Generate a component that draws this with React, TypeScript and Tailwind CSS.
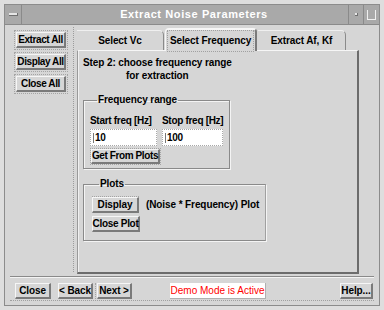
import React from "react";

function Btn({ children, className = "" }: { children: React.ReactNode; className?: string }) {
  return (
    <div
      className={`flex items-center justify-center border-t border-l border-t-[#f6f6f6] border-l-[#f6f6f6] border-b-2 border-r-2 border-b-[#7a7a7a] border-r-[#7a7a7a] bg-[#d6d6d6] whitespace-nowrap ${className}`}
    >
      {children}
    </div>
  );
}

function Field({ value, className = "" }: { value: string; className?: string }) {
  return (
    <div className={`flex items-center h-[17px] bg-white border border-dotted border-[#a8a8a8] pl-[2px] ${className}`}>
      <div className="w-[1px] h-[10px] bg-[#777] mr-[1px]" />
      <span className="font-bold">{value}</span>
    </div>
  );
}

export default function App() {
  return (
    <div className="w-[384px] h-[310px] bg-[#dedede] pt-[4px] px-[4px] pb-[4px] font-['Liberation_Sans',sans-serif] text-[10px] tracking-[-0.1px] font-bold text-black leading-none whitespace-nowrap">
      <div className="w-full h-full border border-[#8c8c8c] bg-[#d6d6d6] flex flex-col">
        {/* title bar */}
        <div className="h-[20px] flex bg-[#a9a9a9] border-b border-[#8a8a8a] shrink-0">
          <div className="w-[17px] border-r border-[#8a8a8a] flex items-center justify-center">
            <div className="w-[9px] h-[3px] bg-[#e6e6e6] border-b border-r border-[#707070]" />
          </div>
          <div className="flex-1 flex items-center justify-center pl-[18px] text-white text-[11px] tracking-[0.6px]">
            Extract Noise Parameters
          </div>
          <div className="w-[15px] border-l border-[#8a8a8a] flex items-center justify-center">
            <div className="w-[3px] h-[3px] bg-[#e6e6e6] border-b border-r border-[#707070]" />
          </div>
          <div className="w-[16px] border-l border-[#8a8a8a] flex items-center justify-center">
            <div className="w-[9px] h-[10px] border-l border-b border-r border-[#f0f0f0]" />
          </div>
        </div>

        {/* body */}
        <div className="flex-1 flex flex-col">
          <div className="flex h-[249px] pt-[2px]">
            {/* left column */}
            <div className="w-[69px] pl-[9px] pt-[3px] flex flex-col gap-[2px] border-r border-dotted border-[#9c9c9c] mb-[2px] tracking-[-0.4px]">
              <div className="border border-dotted border-[#a4a4a4] p-[1px] w-[54px]">
                <Btn className="h-[16px]">Extract All</Btn>
              </div>
              <div className="border border-dotted border-[#a4a4a4] p-[1px] w-[54px]">
                <Btn className="h-[16px]">Display All</Btn>
              </div>
              <div className="border border-dotted border-[#a4a4a4] p-[1px] w-[54px]">
                <Btn className="h-[16px]">Close All</Btn>
              </div>
            </div>

            {/* tabs + panel */}
            <div className="flex-1 flex flex-col pl-[3px] pr-[20px]">
              <div className="flex items-end h-[23px]">
                <div className="w-[87px] h-[20px] flex items-center justify-center border-t border-[#efefef] border-r border-r-[#8a8a8a] rounded-tr-[5px]">
                  Select Vc
                </div>
                <div className="w-[92px] h-[23px] flex items-center justify-center border-t-2 border-l border-[#f6f6f6] border-r-2 border-r-[#7a7a7a] rounded-t-[4px] ml-[1px] relative z-10 -mb-[1px] bg-[#d6d6d6]">
                  <div className="border border-dotted border-[#a0a0a0] px-[2px] py-[5px]">Select Frequency</div>
                </div>
                <div className="w-[88px] h-[20px] flex items-center justify-center border-t border-[#efefef] border-r border-r-[#8a8a8a] rounded-tr-[5px] ml-[1px]">
                  Extract Af, Kf
                </div>
              </div>
              <div className="flex-1 border-t border-t-[#f6f6f6] border-l border-l-[#9a9a9a] border-r-2 border-r-[#6c6c6c] border-b-2 border-b-[#6c6c6c] shadow-[inset_1px_0_0_#f0f0f0] pl-[5px] pt-[7px]">
                <div className="inline-flex flex-col items-center">
                  <div className="self-start">Step 2: choose frequency range</div>
                  <div className="mt-[3px]">for extraction</div>
                </div>

                <fieldset className="mt-[14px] w-[147px] min-w-0 h-[74px] border border-[#8a8a8a] shadow-[1px_1px_0_#f4f4f4,inset_1px_1px_0_#f4f4f4] px-[6px]">
                  <legend className="ml-[7px] px-[1px]">Frequency range</legend>
                  <div className="flex gap-[5px] mt-[11px] tracking-[-0.3px]">
                    <div className="w-[67px] flex flex-col gap-[3px]">
                      <div>Start freq [Hz]</div>
                      <Field value="10" className="w-[67px]" />
                    </div>
                    <div className="w-[61px] flex flex-col gap-[3px]">
                      <div>Stop freq [Hz]</div>
                      <Field value="100" className="w-[61px]" />
                    </div>
                  </div>
                  <div className="mt-[2px] inline-block border border-dotted border-[#a4a4a4] tracking-[-0.4px]">
                    <Btn className="h-[15px] w-[69px]">Get From Plots</Btn>
                  </div>
                </fieldset>

                <fieldset className="mt-[10px] w-[183px] min-w-0 h-[62px] border border-[#8a8a8a] border-r-[#a0a0a0] shadow-[1px_1px_0_#f4f4f4,inset_1px_1px_0_#f4f4f4] pl-[8px]">
                  <legend className="ml-[7px] px-[1px]">Plots</legend>
                  <div className="flex items-center gap-[7px] mt-[7px]">
                    <div className="border-t border-dotted border-[#a4a4a4]">
                      <Btn className="w-[47px] h-[16px]">Display</Btn>
                    </div>
                    <span>(Noise * Frequency) Plot</span>
                  </div>
                  <Btn className="w-[48px] h-[16px] mt-[3px] tracking-[-0.3px]">Close Plot</Btn>
                </fieldset>
              </div>
            </div>
          </div>

          {/* separator */}
          <div className="mx-[5px] mt-[2px] border-t border-[#8a8a8a] border-b border-b-[#f4f4f4]" />

          {/* bottom row */}
          <div className="flex items-center h-[16px] mt-[5px] pl-[10px] pr-[6px]">
            <Btn className="w-[36px] h-[16px]">Close</Btn>
            <Btn className="w-[35px] h-[16px] ml-[7px]">&lt; Back</Btn>
            <div className="border-l border-dotted border-[#a4a4a4] ml-[2px] pl-[1px]">
              <Btn className="w-[35px] h-[16px]">Next &gt;</Btn>
            </div>
            <div className="ml-[38px] h-[16px] w-[96px] bg-white flex items-center justify-center text-[#ff0000] font-normal text-[10px] tracking-normal border-b border-r border-[#b0b0b0]">
              Demo Mode is Active
            </div>
            <div className="flex-1" />
            <Btn className="w-[33px] h-[16px]">Help...</Btn>
          </div>
          <div className="mt-auto mx-[5px] mb-[4px] border-t border-dotted border-[#a0a0a0]" />
        </div>
      </div>
    </div>
  );
}
